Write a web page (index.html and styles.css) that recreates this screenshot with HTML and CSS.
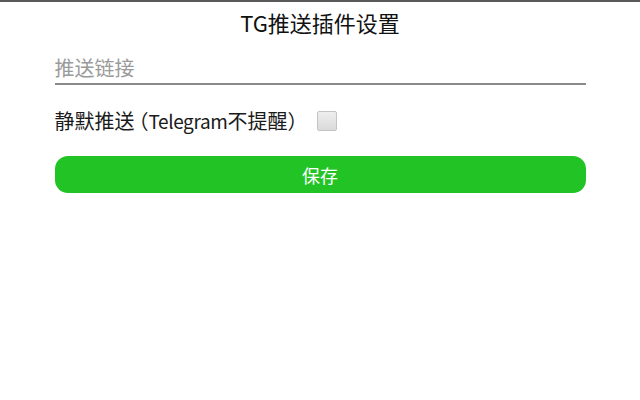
FILE: index.html
```html
<!DOCTYPE html>
<html lang="zh-CN">
<head>
<meta charset="utf-8">
<title>TG推送插件设置</title>
<link rel="stylesheet" href="styles.css">
</head>
<body>
<div class="topline"></div>
<main class="panel">
  <h1 class="title">TG推送插件设置</h1>
  <input class="url" type="text" placeholder="推送链接">
  <label class="silent">静默推送<span class="paren">（</span><span class="latin">Telegram</span>不提醒）<span class="box"></span></label>
  <button class="save" type="button">保存</button>
</main>
</body>
</html>
```
FILE: styles.css
```css
html, body {
  margin: 0;
  padding: 0;
  background: #fff;
  font-family: "Noto Sans CJK SC", "Noto Sans", sans-serif;
  color: #1a1a1a;
}
.topline {
  height: 2px;
  background: #5a5a5a;
}
.panel {
  width: 531px;
  margin: 0 auto;
  display: flex;
  flex-direction: column;
}
.title {
  margin: 4px 0 0;
  font-size: 22px;
  font-weight: 400;
  text-align: center;
  line-height: 32px;
  color: #111;
}
.url {
  margin-top: 13px;
  border: none;
  border-bottom: 2px solid #8a8a8a;
  outline: none;
  padding: 0;
  height: 32px;
  font-family: inherit;
  font-size: 20px;
  color: #333;
  background: transparent;
}
.url::placeholder {
  color: #9a9a9a;
}
.silent {
  margin-top: 21px;
  display: flex;
  align-items: center;
  font-size: 20px;
  line-height: 30px;
  color: #1a1a1a;
}
.paren {
  font-feature-settings: "halt";
  padding-left: 4px;
}
.latin {
  font-size: 19px;
  letter-spacing: -0.4px;
}
.box {
  width: 18px;
  height: 18px;
  margin-left: 10px;
  border: 1px solid #c4c4c4;
  border-radius: 2px;
  background: linear-gradient(#eeeeee, #dadada);
}
.save {
  margin-top: 20px;
  height: 37px;
  border: none;
  border-radius: 13px;
  background: #22c425;
  color: #fff;
  font-family: inherit;
  font-size: 18px;
  padding: 0;
}
```
